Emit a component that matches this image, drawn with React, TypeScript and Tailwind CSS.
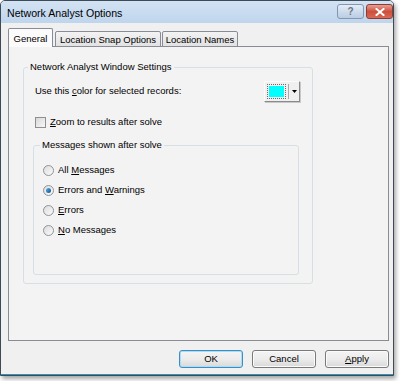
import React from 'react';

const font = { fontFamily: '"Liberation Sans", Arial, sans-serif' };

function Radio({ checked }: { checked?: boolean }) {
  return (
    <span className="w-[11px] h-[11px] rounded-full border border-[#8e9499] bg-gradient-to-br from-[#dcdcdc] to-[#fbfbfb] flex items-center justify-center shrink-0">
      {checked && <span className="w-[5px] h-[5px] rounded-full bg-gradient-to-br from-[#5bb3e8] to-[#0e4f8e]" />}
    </span>
  );
}

function Btn({ children, focused }: { children: React.ReactNode; focused?: boolean }) {
  return (
    <button
      className={`w-[64px] h-[18px] rounded-[3px] border text-[9.5px] text-black bg-gradient-to-b from-[#f4f4f4] via-[#ececec] to-[#d9d9d9] flex items-center justify-center ${
        focused ? 'border-[#3c8ec2] shadow-[inset_0_0_0_1px_#a9dcf6]' : 'border-[#7a7a7a] shadow-[inset_0_0_0_1px_#fbfbfb]'
      }`}
    >
      {children}
    </button>
  );
}

export default function App() {
  return (
    <div className="w-[400px] h-[381px] bg-white" style={font}>
      <div className="w-[394px] h-[376px] flex flex-col border border-[#3d4b59] rounded-t-[5px] shadow-[2px_3px_4px_rgba(0,0,0,0.35)] bg-[#f0f0f0]">
        {/* title bar */}
        <div className="h-[22px] shrink-0 flex items-start bg-gradient-to-b from-[#d3e3f4] to-[#bfd5ec] rounded-t-[4px] pl-[6px]">
          <span className="text-[10.6px] text-black mt-[6px] leading-[12px]">Network Analyst Options</span>
          <div className="ml-auto flex gap-[2px] mt-[3px]">
            <div className="w-[27px] h-[15px] rounded-[3px] border border-[#8497ae] bg-gradient-to-b from-[#e4edf7] via-[#cedcec] to-[#b9cde4] flex items-center justify-center">
              <span className="text-[10px] font-bold leading-none text-[#6d7683]">?</span>
            </div>
            <div className="w-[27px] h-[15px] rounded-[3px] border border-[#8b3d33] bg-gradient-to-b from-[#e6a195] via-[#cd4f3c] to-[#d86a55] flex items-center justify-center">
              <svg width="10" height="8" viewBox="0 0 10 8">
                <path d="M1.5 1 L8.5 7 M8.5 1 L1.5 7" stroke="#fff" strokeWidth="2" strokeLinecap="square" />
              </svg>
            </div>
          </div>
        </div>

        {/* body */}
        <div className="flex-1 flex flex-col pl-[7px] pr-[4px] pt-[5px] border-b border-[#2f94b5]">
          <div className="flex items-end h-[19px] -mb-px text-[9.5px] text-black">
            <div className="relative z-10 w-[45px] h-[19px] border border-b-0 border-[#898c95] bg-[#fbfbfb] rounded-t-[2px] flex justify-center pt-[3px]">
              General
            </div>
            <div className="w-[106px] h-[16px] ml-[2px] border border-[#898c95] bg-gradient-to-b from-[#f3f3f3] to-[#e2e2e2] rounded-t-[2px] flex justify-center pt-[1px]">
              Location Snap Options
            </div>
            <div className="w-[76px] h-[16px] ml-px border border-[#898c95] bg-gradient-to-b from-[#f3f3f3] to-[#e2e2e2] rounded-t-[2px] flex justify-center pt-[1px]">
              Location Names
            </div>
          </div>

          <div className="w-[381px] h-[295px] border border-[#898c95] bg-[#f3f3f3] pl-[14px] pt-[14px] text-[9.5px] text-black">
            <fieldset className="w-[290px] h-[223px] border border-[#d5dfe5] rounded-[3px] p-0 m-0">
              <legend className="ml-[4px] px-[2px] leading-[12px]">Network Analyst Window Settings</legend>
              <div className="pl-[11px] pr-[12px]">
                <div className="mt-[8px] h-[21px] flex items-center justify-between">
                  <span>
                    Use this <span className="underline">c</span>olor for selected records:
                  </span>
                  <div className="w-[36px] h-[21px] flex items-center bg-[#f0f0f0] border border-t-[#fbfbfb] border-l-[#fbfbfb] border-r-[#8a8a8a] border-b-[#8a8a8a] shadow-[1px_1px_0_#c8c8c8]">
                    <div className="ml-[2px] w-[19px] h-[15px] border border-dotted border-[#6a6a6a] p-px">
                      <div className="w-full h-full bg-[#00ffff]" />
                    </div>
                    <div className="ml-[2px] w-px h-[15px] bg-[#a8a8a8]" />
                    <svg className="ml-[3px]" width="5" height="3" viewBox="0 0 5 3">
                      <path d="M0 0 H5 L2.5 3 Z" fill="#000" />
                    </svg>
                  </div>
                </div>

                <div className="mt-[14px] h-[12px] flex items-center gap-[4px]">
                  <span className="w-[11px] h-[11px] border border-[#8e8f8f] bg-gradient-to-br from-[#d8d8d8] to-[#f8f8f8] shrink-0" />
                  <span>
                    <span className="underline">Z</span>oom to results after solve
                  </span>
                </div>
              </div>

              <fieldset className="ml-[9px] mt-[11px] w-[266px] h-[136px] border border-[#d5dfe5] rounded-[3px] p-0">
                <legend className="ml-[6px] px-[2px] leading-[12px]">Messages shown after solve</legend>
                <div className="pl-[9px] mt-[9px] flex flex-col">
                  <div className="h-[20px] flex items-center gap-[4px]">
                    <Radio />
                    <span>
                      All <span className="underline">M</span>essages
                    </span>
                  </div>
                  <div className="h-[20px] flex items-center gap-[4px]">
                    <Radio checked />
                    <span>
                      Errors and <span className="underline">W</span>arnings
                    </span>
                  </div>
                  <div className="h-[20px] flex items-center gap-[4px]">
                    <Radio />
                    <span>
                      <span className="underline">E</span>rrors
                    </span>
                  </div>
                  <div className="h-[20px] flex items-center gap-[4px]">
                    <Radio />
                    <span>
                      <span className="underline">N</span>o Messages
                    </span>
                  </div>
                </div>
              </fieldset>
            </fieldset>
          </div>

          <div className="mt-[9px] w-[381px] flex justify-end gap-[9px]">
            <Btn focused>OK</Btn>
            <Btn>Cancel</Btn>
            <Btn>
              <span className="underline">A</span>pply
            </Btn>
          </div>
        </div>
      </div>
    </div>
  );
}
